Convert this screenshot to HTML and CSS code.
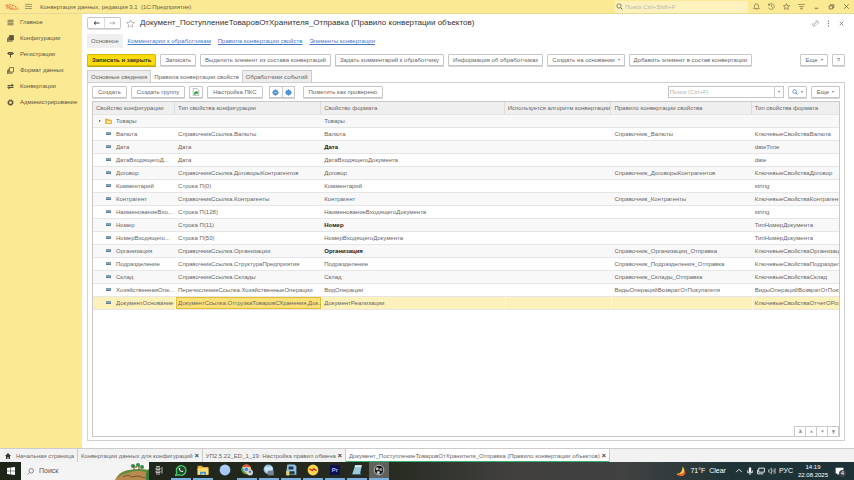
FILE: index.html
```html
<!DOCTYPE html>
<html lang="ru">
<head>
	<meta charset="utf-8">
	<title>Конвертация данных, редакция 3.1</title>
	<link rel="stylesheet" href="styles.css">
</head>
<body>

	<!-- Shared icons -->
	<svg class="defs" width="0" height="0">
		<symbol id="star" viewBox="0 0 12 12"><path d="M6 1l1.5 3.5 3.8.3-2.9 2.5.9 3.7L6 9l-3.3 2 .9-3.7L.7 4.800l3.800-.3z" fill="none" stroke="currentColor"/></symbol>
		<symbol id="sheets" viewBox="0 0 14 14"><path d="M5 1h8v9H5zM3 3.500v8.500h8M1 5.500V14h8" fill="none" stroke="currentColor" stroke-width="1.500"/></symbol>
		<symbol id="lens" viewBox="0 0 14 14"><path d="M9.500 9.500L13 13" stroke="currentColor" stroke-width="2"/><circle cx="6" cy="6" r="4.300" fill="none" stroke="currentColor" stroke-width="1.500"/></symbol>
	</svg>

	<header class="topbar">
		<svg class="logo" viewBox="0 0 28 16"><path d="M1 6l3-3v9M13 5c-2-4-7-2-7 2s4 6 7 5h14M12 7c-2-1-4 0-3 2s2 1 4 1h3M15 3v3M18 4v3M21 6v3M24 7v2" fill="none" stroke="#e0603a" stroke-width="1.500"/></svg>
		<button class="icon-btn" aria-label="Меню"><svg viewBox="0 0 12 12"><path d="M0 2.500h12M0 6h12M0 9.500h12" stroke="currentColor"/></svg></button>
		<span class="app-name">Конвертация данных, редакция 3.1&nbsp; (1С:Предприятие)</span>
		<label class="global-search">
			<svg viewBox="0 0 14 14"><use href="#lens"/></svg>
			<input type="text" aria-label="Поиск" placeholder="Поиск Ctrl+Shift+F">
		</label>
		<div class="window-icons">
			<button class="icon-btn" aria-label="Оповещения"><svg viewBox="0 0 12 12"><path d="M1 9.500h10L9.500 8V5a3.500 3.500 0 0 0-7 0v3zM5 11h2" fill="none" stroke="currentColor"/></svg></button>
			<button class="icon-btn" aria-label="История"><svg viewBox="0 0 12 12"><path d="M1 4a5 5 0 1 1 0 4M1 1v3h3M6 3v3l2.500 2" fill="none" stroke="currentColor"/></svg></button>
			<button class="icon-btn" aria-label="Избранное"><svg viewBox="0 0 12 12"><use href="#star"/></svg></button>
			<button class="icon-btn" aria-label="Настройки"><svg viewBox="0 0 12 12"><path d="M0 2.500h12M2 6h8M4 9l2 2 2-2z" fill="none" stroke="currentColor"/></svg></button>
			<button class="icon-btn" aria-label="Свернуть"><svg viewBox="0 0 12 12"><path d="M3 9h6" stroke="currentColor" stroke-width="1.500"/></svg></button>
			<button class="icon-btn" aria-label="Развернуть"><svg viewBox="0 0 12 12"><path d="M2 5h6v5H2zM4 5V3h6v5H8" fill="none" stroke="currentColor" stroke-width="1.300"/></svg></button>
			<button class="icon-btn" aria-label="Закрыть"><svg viewBox="0 0 12 12"><path d="M2 2l8 8M10 2l-8 8" stroke="currentColor" stroke-width="1.300"/></svg></button>
		</div>
	</header>

	<div class="workspace">
		<nav class="sidebar">
			<a href="#"><svg viewBox="0 0 14 14"><path d="M1 2.500h12M1 5.500h12M1 8.500h12M1 11.500h12" stroke="currentColor" stroke-width="1.500"/></svg>Главное</a>
			<a href="#"><svg viewBox="0 0 14 14"><path d="M5 1h8v9H5z" fill="currentColor"/><use href="#sheets"/></svg>Конфигурации</a>
			<a href="#"><svg viewBox="0 0 14 14"><path d="M0 5l3-3h8l3 3-4 3H8v5H6V8H4z" fill="currentColor"/><path d="M4 5h6" stroke="#fbe993" stroke-dasharray="1 1"/></svg>Регистрации</a>
			<a href="#"><svg viewBox="0 0 14 14"><use href="#sheets"/></svg>Формат данных</a>
			<a href="#"><svg viewBox="0 0 14 14"><path d="M1 5h9M4 9h9" stroke="currentColor" stroke-width="2"/><path d="M9 1l5 4-5 3zM5 6L0 9l5 4z" fill="currentColor"/></svg>Конвертации</a>
			<a href="#"><svg viewBox="0 0 14 14"><circle cx="7" cy="7" r="4" fill="none" stroke="currentColor" stroke-width="2.500"/><circle cx="7" cy="7" r="5.500" fill="none" stroke="currentColor" stroke-width="2" stroke-dasharray="2.200 2.100"/></svg>Администрирование</a>
		</nav>

		<main class="form">
			<div class="title-row">
				<div class="history">
					<button aria-label="Назад"><svg viewBox="0 0 14 8"><path d="M13 4H3M6 1L2 4l4 3" fill="none" stroke="#444" stroke-width="2"/></svg></button>
					<button aria-label="Вперед"><svg viewBox="0 0 14 8"><path d="M1 4h10M8 1l4 3-4 3" fill="none" stroke="#999" stroke-width="1.500"/></svg></button>
				</div>
				<button class="icon-btn fav" aria-label="В избранное"><svg viewBox="0 0 12 12"><use href="#star"/></svg></button>
				<h1>Документ_ПоступлениеТоваровОтХранителя_Отправка (Правило конвертации объектов)</h1>
				<div class="form-icons">
					<button class="icon-btn" aria-label="Ссылка"><svg viewBox="0 0 12 12"><path d="M5 4l2-2a2.500 2.500 0 0 1 3.500 3.500l-2 2M7 8l-2 2A2.500 2.500 0 0 1 1.500 6.500l2-2M4 8l4-4" fill="none" stroke="currentColor"/></svg></button>
					<button class="icon-btn" aria-label="Еще действия"><svg viewBox="0 0 12 12"><path d="M6 1v2M6 5v2M6 9v2" stroke="currentColor" stroke-width="2"/></svg></button>
					<button class="icon-btn" aria-label="Закрыть форму"><svg viewBox="0 0 12 12"><path d="M3 3l6 6M9 3l-6 6" stroke="currentColor" stroke-width="1.300"/></svg></button>
				</div>
			</div>

			<nav class="form-nav">
				<a href="#" class="current">Основное</a>
				<a href="#">Комментарии к обработчикам</a>
				<a href="#">Правила конвертации свойств</a>
				<a href="#">Элементы конвертации</a>
			</nav>

			<div class="commands">
				<button class="btn primary">Записать и закрыть</button>
				<button class="btn">Записать</button>
				<button class="btn">Выделить элемент из состава конвертаций</button>
				<button class="btn">Задать комментарий к обработчику</button>
				<button class="btn">Информация об обработчиках</button>
				<button class="btn drop">Создать на основании</button>
				<button class="btn">Добавить элемент в состав конвертации</button>
				<button class="btn drop last">Еще</button>
				<button class="btn help">?</button>
			</div>

			<div class="tabs">
				<button>Основные сведения</button>
				<button class="active">Правила конвертации свойств</button>
				<button>Обработчики событий</button>
			</div>

			<section class="panel">
				<div class="toolbar">
					<button class="btn">Создать</button>
					<button class="btn">Создать группу</button>
					<button class="btn square" aria-label="Обновить"><svg viewBox="0 0 14 14"><path d="M2 1h7l3 3v9H2z" fill="#fff" stroke="#8a9a8a"/><path d="M4 9a3 3 0 0 1 5-2l1-1v4H7l1-1a2 2 0 0 0-2 0l-1 3z" fill="#2fa04a" stroke="#2fa04a"/></svg></button>
					<button class="btn">Настройка ПКС</button>
					<div class="move">
						<button aria-label="Вверх"><svg viewBox="0 0 12 12"><path d="M6 0l2 2h2v2l2 2-2 2v2H8l-2 2-2-2H2V8L0 6l2-2V2h2z" fill="#4b93d6"/><path d="M4 6h4" stroke="#fff"/></svg></button>
						<button aria-label="Вниз"><svg viewBox="0 0 12 12"><path d="M6 0l2 2h2v2l2 2-2 2v2H8l-2 2-2-2H2V8L0 6l2-2V2h2z" fill="#4b93d6"/></svg></button>
					</div>
					<button class="btn">Пометить как проверено</button>
					<div class="find">
						<input type="text" aria-label="Поиск в списке" placeholder="Поиск (Ctrl+F)">
						<button class="arrow" aria-label="История поиска"></button>
					</div>
					<button class="btn drop lens" aria-label="Найти"><svg viewBox="0 0 14 14"><use href="#lens"/></svg></button>
					<button class="btn drop">Еще</button>
				</div>

				<div class="grid">
					<table>
						<colgroup><col class="c-conf"><col class="c-type"><col class="c-format"><col class="c-algo"><col class="c-rule"><col class="c-ftype"></colgroup>
						<thead>
							<tr><th>Свойство конфигурации</th><th>Тип свойства конфигурации</th><th>Свойство формата</th><th>Используется алгоритм конвертации</th><th>Правило конвертации свойства</th><th>Тип свойства формата</th></tr>
						</thead>
						<tbody>
							<tr><td class="group"><svg viewBox="0 0 14 12"><path d="M1 2h5l1 2h6v8H1z" fill="#f5bd45" stroke="#d99227"/><path d="M4 6h7v4H4z" fill="#fff0b0"/></svg>Товары</td><td></td><td>Товары</td><td></td><td></td><td></td></tr>
							<tr><td>Валюта</td><td>СправочникСсылка.Валюты</td><td>Валюта</td><td></td><td>Справочник_Валюты</td><td>КлючевыеСвойстваВалюта</td></tr>
							<tr><td>Дата</td><td>Дата</td><td class="key">Дата</td><td></td><td></td><td>dateTime</td></tr>
							<tr><td>ДатаВходящегоД...</td><td>Дата</td><td>ДатаВходящегоДокумента</td><td></td><td></td><td>date</td></tr>
							<tr><td>Договор</td><td>СправочникСсылка.ДоговорыКонтрагентов</td><td>Договор</td><td></td><td>Справочник_ДоговорыКонтрагентов</td><td>КлючевыеСвойстваДоговор</td></tr>
							<tr><td>Комментарий</td><td>Строка П(0)</td><td>Комментарий</td><td></td><td></td><td>string</td></tr>
							<tr><td>Контрагент</td><td>СправочникСсылка.Контрагенты</td><td>Контрагент</td><td></td><td>Справочник_Контрагенты</td><td>КлючевыеСвойстваКонтрагент</td></tr>
							<tr><td>НаименованиеВхо...</td><td>Строка П(128)</td><td>НаименованиеВходящегоДокумента</td><td></td><td></td><td>string</td></tr>
							<tr><td>Номер</td><td>Строка П(11)</td><td class="key">Номер</td><td></td><td></td><td>ТипНомерДокумента</td></tr>
							<tr><td>НомерВходящего...</td><td>Строка П(50)</td><td>НомерВходящегоДокумента</td><td></td><td></td><td>ТипНомерДокумента</td></tr>
							<tr><td>Организация</td><td>СправочникСсылка.Организации</td><td class="key">Организация</td><td></td><td>Справочник_Организации_Отправка</td><td>КлючевыеСвойстваОрганизаци</td></tr>
							<tr><td>Подразделение</td><td>СправочникСсылка.СтруктураПредприятия</td><td>Подразделение</td><td></td><td>Справочник_Подразделения_Отправка</td><td>КлючевыеСвойстваПодраздел</td></tr>
							<tr><td>Склад</td><td>СправочникСсылка.Склады</td><td>Склад</td><td></td><td>Справочник_Склады_Отправка</td><td>КлючевыеСвойстваСклад</td></tr>
							<tr><td>ХозяйственнаяОпе...</td><td>ПеречислениеСсылка.ХозяйственныеОперации</td><td>ВидОперации</td><td></td><td>ВидыОперацийВозвратОтПокупателя</td><td>ВидыОперацийВозвратОтПоку</td></tr>
							<tr class="selected"><td>ДокументОснование</td><td class="cell">ДокументСсылка.ОтгрузкаТоваровСХранения,Док...</td><td>ДокументРеализации</td><td></td><td></td><td>КлючевыеСвойстваОтчетОРоз</td></tr>
						</tbody>
					</table>
					<div class="pager">
						<button aria-label="В начало"><svg viewBox="0 0 10 10"><path d="M2 2h6M5 3l3 4H2z" fill="#888" stroke="#888"/></svg></button>
						<button aria-label="Вверх по списку"><svg viewBox="0 0 10 10"><path d="M5 3l3 4H2z" fill="#888"/></svg></button>
						<button aria-label="Вниз по списку"><svg viewBox="0 0 10 10"><path d="M5 7l3-4H2z" fill="#888"/></svg></button>
						<button aria-label="В конец"><svg viewBox="0 0 10 10"><path d="M2 8h6M5 7l3-4H2z" fill="#888" stroke="#888"/></svg></button>
					</div>
				</div>
			</section>
		</main>
	</div>

	<!-- Open windows -->
	<nav class="windows">
		<a href="#" class="home"><svg viewBox="0 0 12 12"><path d="M6 0l6 6h-2v6H7V8H5v4H2V6H0z" fill="#333"/></svg>Начальная страница</a>
		<a href="#">Конвертации данных для конфигураций<b>×</b></a>
		<a href="#">УП2.5.22_ED_1_19: Настройка правил обмена<b>×</b></a>
		<a href="#" class="open">Документ_ПоступлениеТоваровОтХранителя_Отправка (Правило конвертации объектов)<b>×</b></a>
	</nav>

	<footer class="taskbar">
		<button class="start" aria-label="Пуск"><svg viewBox="0 0 16 16"><path d="M0 2l7-1v6.500H0zM8 1l8-1v7.500H8zM0 8.500h7V15l-7-1zM8 8.500h8V16l-8-1z" fill="#fff"/></svg></button>
		<label class="task-search">
			<svg viewBox="0 0 14 14"><circle cx="8.500" cy="5.500" r="4.500" fill="none" stroke="#555" stroke-width="1.300"/><path d="M5 9l-4 4" stroke="#555" stroke-width="1.300"/></svg>
			<input type="text" aria-label="Поиск Windows" placeholder="Поиск">
			<svg class="scene" viewBox="0 0 34 18"><path d="M0 18c3-7 8-9 14-10s14-1 20 0v10z" fill="#b98a4e"/><path d="M1 17c4-6 8-8 13-9 6-1 14-1 20 0v3c-8-3-14-2-18-1s-11 3-15 7z" fill="#5b9140"/><path d="M8 15l5-2 4 2 6-1 7 2" fill="none" stroke="#745333"/><path d="M19 8V4M24 8V3" stroke="#6b4a2a"/><circle cx="18" cy="4" r="2" fill="#3b7d3c"/><circle cx="23" cy="3" r="2" fill="#2e9150"/><circle cx="27" cy="5" r="2" fill="#3f8a43"/><circle cx="21" cy="5" r="1" fill="#d9543c"/><path d="M31 18c-1-4 0-9 3-11v11z" fill="#3b7d3c"/></svg>
		</label>
		<div class="apps">
			<button class="idle" aria-label="Представление задач"><svg viewBox="0 0 20 20"><path d="M4 6h8v3H4zM4 12h8v3H4zM16 4v13M4 3h8M4 18h8" fill="none" stroke="#ddd" stroke-width="1.600"/></svg></button>
			<button aria-label="WhatsApp"><svg viewBox="0 0 20 20"><path d="M1 19l2-5a8 8 0 1 1 4 4z" fill="#20472c" stroke="#49d468" stroke-width="2"/><path d="M7 6c-3 3 3 9 7 7l-2-2-1 1-3-3 1-1z" fill="#fff"/></svg></button>
			<button aria-label="Проводник"><svg viewBox="0 0 20 20"><path d="M1 3h7l2 2h9v13H1z" fill="#e9ad35"/><path d="M1 7h18v11H1z" fill="#ffdb70"/><path d="M5 18v-5h10v5h-3v-2H8v2z" fill="#4397dc"/></svg></button>
			<button class="idle" aria-label="Просмотр"><svg viewBox="0 0 20 20"><circle cx="10" cy="10" r="9" fill="#a9c8fa"/><path d="M5 6c3-3 9-3 11 1" stroke="#d3e2ff" fill="none"/></svg></button>
			<button aria-label="Chrome"><svg viewBox="0 0 20 20"><circle cx="9" cy="9" r="8" fill="#f2c744"/><path d="M2 5a8 8 0 0 1 14 0H9z" fill="#dd5040"/><path d="M2 5l4 6 3 6a8 8 0 0 1-7-12z" fill="#44a35a"/><circle cx="9" cy="9" r="4" fill="#4d88e8" stroke="#fff"/><circle cx="15" cy="14" r="5" fill="#ccd5df"/><circle cx="15" cy="13" r="2" fill="#66778a"/></svg></button>
			<button aria-label="Почта"><svg viewBox="0 0 20 20"><circle cx="9" cy="9" r="8" fill="#89bde6"/><path d="M2 7l4-4 3 3 4-3 4 5-4 5H5z" fill="#cbe5f8"/><path d="M8 11h10v8H8z" fill="#768492"/></svg></button>
			<button aria-label="Редактор"><svg viewBox="0 0 20 20"><path d="M4 1h12l3 3v14H7l-5-4z" fill="#91c4e8"/><path d="M6 4h8v5H6zM7 12h9v5H7z" fill="#263746"/><path d="M2 12h5v7H2z" fill="#efd66c"/></svg></button>
			<button aria-label="Яндекс"><svg viewBox="0 0 20 20"><circle cx="10" cy="10" r="9" fill="#ffd650"/><path d="M4 8l5 3 2-3 5 3" stroke="#d9382c" stroke-width="2.500" fill="none"/></svg></button>
			<button class="pr" aria-label="Premiere">Pr</button>
			<button aria-label="Блокнот"><svg viewBox="0 0 20 20"><path d="M7 2h11l-3 15H2z" fill="#9acbdb"/><path d="M7 2h11l-1 3H6z" fill="#e0eff2"/><path d="M2 17h13l1-4 1 5H2z" fill="#4a7887"/></svg></button>
			<button class="focus" aria-label="OBS"><svg viewBox="0 0 20 20"><circle cx="10" cy="10" r="8" fill="#171717" stroke="#c9c9c9" stroke-width="1.500"/><circle cx="7" cy="8" r="2.500" fill="#bbb"/><circle cx="13" cy="9" r="2.500" fill="#999"/><circle cx="9" cy="14" r="2.500" fill="#ccc"/></svg></button>
		</div>
		<div class="tray">
			<svg class="weather" viewBox="0 0 20 20"><path d="M12 1c4 4 5 11 0 14s-9 2-11-1c6 1 11-4 11-13z" fill="#ffca37"/><path d="M3 14c4 2 11 0 13-5 2 4 0 8-4 9s-8-1-9-4z" fill="#e9602d"/></svg>
			<span class="temp">71°F&nbsp; Clear</span>
			<svg viewBox="0 0 14 14"><path d="M2 9l5-5 5 5" fill="none" stroke="#fff" stroke-width="1.500"/></svg>
			<svg viewBox="0 0 14 14"><path d="M5 1h4v8H5z" fill="#fff"/><path d="M3 6v4h8V6M7 10v4" fill="none" stroke="#fff" stroke-width="1.500"/></svg>
			<svg viewBox="0 0 14 14"><path d="M3 2h10v7H3zM1 5v7h5M6 12h5" fill="none" stroke="#fff" stroke-width="1.500"/></svg>
			<svg viewBox="0 0 14 14"><path d="M1 5h2l3-3v10L3 9H1zM8 5c1 1 1 3 0 4M10 3c2 2 2 6 0 8M12 2c3 3 3 7 0 10" fill="none" stroke="#fff"/></svg>
			<span class="lang">РУС</span>
			<time class="clock">14:19<br>22.08.2025</time>
			<div class="notes"><svg viewBox="0 0 14 14"><path d="M1 1h12v9H7l-3 3v-3H1z" fill="#fff"/></svg><span>4</span></div>
		</div>
	</footer>

</body>
</html>
```
FILE: styles.css
```css
*
{
	box-sizing: border-box;
}
body
{
	margin: 0;
	height: 100vh;
	display: flex;
	flex-direction: column;
	background-color: white;
	font-family: "Liberation Sans", Arial, sans-serif;
	font-size: 6px;
	line-height: 8px;
	color: #666;
	overflow: hidden;
}
button, input
{
	font: inherit;
	color: inherit;
	margin: 0;
	padding: 0;
	border: 0;
	background: none;
}
input
{
	min-width: 0;
	outline: 0;
}
input::placeholder
{
	color: #b5b5b5;
	opacity: 1;
}
a
{
	color: inherit;
	text-decoration: none;
}
svg
{
	display: block;
	flex: none;
}
.defs
{
	position: absolute;
}
.icon-btn
{
	width: 9px;
	height: 9px;
	flex: none;
}
.icon-btn svg
{
	width: 100%;
	height: 100%;
}


/*
	Title bar
*/
.topbar
{
	flex: none;
	height: 14px;
	display: flex;
	align-items: center;
	padding: 0 4px 0 5px;
	background-color: #fbe993;
	border-bottom: 1px solid #e9da93;
	color: #665f45;
}
.logo
{
	width: 14px;
	height: 8px;
	margin-right: 6px;
}
.topbar .icon-btn
{
	width: 7px;
	height: 7px;
}
.app-name
{
	margin-left: 8px;
	flex: 1;
}
.global-search
{
	display: flex;
	align-items: center;
	gap: 2px;
	width: 133px;
	height: 12px;
	padding-left: 1px;
	background-color: #fdf2bd;
}
.global-search svg
{
	width: 7px;
	height: 7px;
}
.global-search input
{
	flex: 1;
}
.window-icons
{
	display: flex;
	gap: 8px;
	margin-left: 5px;
}


/*
	Sections
*/
.workspace
{
	flex: 1;
	min-height: 0;
	display: flex;
}
.sidebar
{
	flex: none;
	width: 82px;
	background-color: #fbe993;
	color: #5c563f;
}
.sidebar a
{
	display: flex;
	align-items: center;
	gap: 6px;
	height: 16px;
	padding-left: 7px;
}
.sidebar svg
{
	width: 7px;
	height: 7px;
}


/*
	Form
*/
.form
{
	flex: 1;
	min-width: 0;
	display: flex;
	flex-direction: column;
	padding: 2px 9px 7px 5px;
}
.title-row
{
	display: flex;
	align-items: center;
	height: 14px;
}
.history
{
	display: flex;
	height: 12px;
	border: 1px solid #c9c9c9;
	border-radius: 2px;
	box-shadow: 0 1px 0 #ddd;
}
.history button
{
	width: 16px;
	display: grid;
	place-items: center;
}
.history button + button
{
	border-left: 1px solid #ddd;
}
.history svg
{
	width: 7px;
	height: 4px;
}
.fav
{
	margin: 0 5px;
	color: #aaa;
}
h1
{
	flex: 1;
	margin: 0;
	font-size: 8px;
	line-height: 12px;
	font-weight: normal;
	color: #333;
	white-space: nowrap;
}
.form-icons
{
	display: flex;
	gap: 6px;
	color: #777;
}
.form-icons .icon-btn
{
	width: 7px;
	height: 7px;
}
.form-nav
{
	display: flex;
	align-items: center;
	gap: 7px;
	height: 14px;
	margin-top: 4px;
}
.form-nav a
{
	color: #4777c8;
	text-decoration: underline;
}
.form-nav .current
{
	margin-right: -2px;
	padding: 3px 4px;
	background-color: #efefef;
	color: #666;
	text-decoration: none;
}


/*
	Buttons
*/
.btn
{
	flex: none;
	height: 12px;
	padding: 0 4px;
	border: 1px solid #c6c6c6;
	border-radius: 1px;
	box-shadow: 0 1px 0 #d5d5d5;
	background-color: white;
	white-space: nowrap;
}
.toolbar .btn
{
	padding: 0 5px;
}
.primary
{
	background-color: #fbdc0a;
	border-color: #d9b800;
	box-shadow: 0 1px 0 #c4a600;
	color: #333;
	font-weight: bold;
}
.drop::after
{
	content: "";
	display: inline-block;
	margin-left: 3px;
	vertical-align: 1px;
	border: 1px solid transparent;
	border-top: 2px solid #777;
	border-bottom: 0;
}
.commands, .toolbar
{
	display: flex;
	align-items: center;
	gap: 4px;
}
.commands
{
	margin-top: 6px;
}
.last
{
	margin-left: auto;
}


/*
	Tabs
*/
.tabs
{
	display: flex;
	margin-top: 4px;
}
.tabs button
{
	height: 12px;
	padding: 0 3px;
	border: 1px solid #ccc;
	border-bottom: 0;
	background-color: #ededed;
}
.tabs button + button
{
	border-left: 0;
}
.tabs .active
{
	border-color: transparent #ccc transparent transparent;
	background-color: white;
}
.panel
{
	flex: 1;
	min-height: 0;
	display: flex;
	flex-direction: column;
	padding: 3px 4px;
	border: 1px solid #cfcfcf;
}
.toolbar .square
{
	width: 14px;
	display: grid;
	place-items: center;
	padding: 0;
}
.square svg
{
	width: 8px;
	height: 8px;
}
.move
{
	display: flex;
	height: 12px;
	margin: 0 4px 0 2px;
	border: 1px solid #c6c6c6;
	box-shadow: 0 1px 0 #d5d5d5;
}
.move button
{
	width: 12px;
	display: grid;
	place-items: center;
}
.move button + button
{
	border-left: 1px solid #ccc;
}
.move svg
{
	width: 7px;
	height: 7px;
}
.find
{
	display: flex;
	width: 116px;
	height: 12px;
	margin-left: auto;
	border: 1px solid #c6c6c6;
}
.find input
{
	flex: 1;
	padding-left: 1px;
}
.arrow
{
	width: 9px;
	display: grid;
	place-items: center;
	border-left: 1px solid #ccc;
}
.arrow::after
{
	content: "";
	border: 1px solid transparent;
	border-top: 2px solid #777;
	border-bottom: 0;
}
.toolbar .lens
{
	display: flex;
	align-items: center;
	padding: 0 3px;
	color: #2f6fc0;
}
.lens svg
{
	width: 6px;
	height: 6px;
}


/*
	Property list
*/
.grid
{
	flex: 1;
	min-height: 0;
	display: flex;
	flex-direction: column;
	justify-content: space-between;
	margin-top: 3px;
	border: 1px solid #c9c9c9;
}
table
{
	width: 100%;
	table-layout: fixed;
	border-collapse: separate;
	border-spacing: 0;
}
.c-conf { width: 11%; }
.c-type { width: 19.6%; }
.c-format { width: 24.6%; }
.c-algo { width: 14.3%; }
.c-rule { width: 18.8%; }
th, td
{
	height: 13px;
	padding: 0 0 0 3px;
	overflow: hidden;
	text-align: left;
	font-weight: normal;
	white-space: nowrap;
	border-bottom: 1px solid #e6e6e6;
}
th
{
	background-color: #efefef;
	border-right: 1px solid #ddd;
}
th:last-child
{
	border-right: 0;
}
tbody tr:nth-child(odd)
{
	background-color: #f8f8f8;
}
td:first-child::before
{
	content: "";
	display: inline-block;
	width: 5px;
	height: 2px;
	margin: 0 5px 0 10px;
	vertical-align: 1px;
	background-color: #7fa0b5;
	border-bottom: 1px solid #56809c;
}
td.group:first-child::before
{
	width: 0;
	height: 0;
	margin: 0 4px 0 3px;
	background: none;
	border: 1px solid transparent;
	border-left: 2px solid #555;
	border-right: 0;
}
.group svg
{
	display: inline-block;
	width: 7px;
	height: 6px;
	margin-right: 4px;
	vertical-align: -1px;
}
.key
{
	font-weight: bold;
	color: #222;
}
.selected td
{
	background-color: #fcf0bb;
}
.selected td + td
{
	border-left: 1px solid #fff8dc;
	padding-left: 2px;
}
.selected .cell
{
	background-color: #ffe17a;
	box-shadow: inset 0 0 0 1px #e5bb35;
}
.pager
{
	display: flex;
	align-self: flex-end;
	border: 1px solid #ccc;
	border-width: 1px 0 0 1px;
}
.pager button
{
	width: 11px;
	height: 9px;
	display: grid;
	place-items: center;
	border-right: 1px solid #ccc;
}
.pager svg
{
	width: 5px;
	height: 5px;
}


/*
	Open windows
*/
.windows
{
	flex: none;
	height: 14px;
	display: flex;
	background-color: #f2f2f2;
	border-top: 1px solid #ccc;
}
.windows a
{
	display: flex;
	align-items: center;
	padding: 0 3px;
	border-right: 1px solid #ccc;
	white-space: nowrap;
}
.windows .home
{
	gap: 5px;
	padding-left: 5px;
}
.windows svg
{
	width: 6px;
	height: 6px;
}
.windows b
{
	margin-left: 2px;
	font-size: 7px;
	color: #333;
}
.windows .open
{
	background-color: white;
	box-shadow: inset 0 -1px 0 #2fb56e;
}


/*
	Taskbar
*/
.taskbar
{
	flex: none;
	height: 18px;
	display: flex;
	background: linear-gradient(90deg, #1d2418, #262a20 45%, #41403f 60%, #414141 73%, #203438 85%, #1c3236);
	color: white;
}
.start
{
	width: 21px;
	display: grid;
	place-items: center;
}
.start svg
{
	width: 8px;
	height: 8px;
}
.task-search
{
	display: flex;
	align-items: center;
	width: 128px;
	padding-left: 6px;
	gap: 5px;
	background-color: #f4f4f4;
	font-size: 7px;
}
.task-search svg
{
	width: 7px;
	height: 7px;
}
.task-search input
{
	flex: 1;
}
.task-search input::placeholder
{
	color: #555;
}
.task-search .scene
{
	width: 34px;
	height: 18px;
}
.apps
{
	display: flex;
	gap: 2px;
}
.apps button
{
	width: 20px;
	display: grid;
	place-items: center;
	border-bottom: 2px solid #79afe0;
}
.apps .idle
{
	border-color: transparent;
}
.apps .focus
{
	background-color: #60605c;
}
.apps svg
{
	width: 12px;
	height: 12px;
}
.apps .idle:first-child svg
{
	width: 10px;
	height: 10px;
}
.apps .pr
{
	background: linear-gradient(#10104c, #10104c) center / 10px 10px no-repeat;
	color: #b9b5ff;
	font-weight: bold;
}
.tray
{
	display: flex;
	align-items: center;
	gap: 3px;
	margin-left: auto;
	padding-right: 10px;
	font-size: 7px;
}
.tray svg
{
	width: 8px;
	height: 8px;
}
.tray .weather
{
	width: 11px;
	height: 11px;
}
.temp
{
	margin-right: 6px;
}
.clock
{
	margin-left: 2px;
	font-size: 6px;
	text-align: center;
}
.notes
{
	position: relative;
	margin-left: 4px;
}
.notes svg
{
	width: 9px;
	height: 9px;
}
.notes span
{
	position: absolute;
	left: 4px;
	top: 3px;
	width: 7px;
	height: 7px;
	border-radius: 50%;
	background-color: #444;
	font-size: 6px;
	line-height: 7px;
	text-align: center;
}
```
